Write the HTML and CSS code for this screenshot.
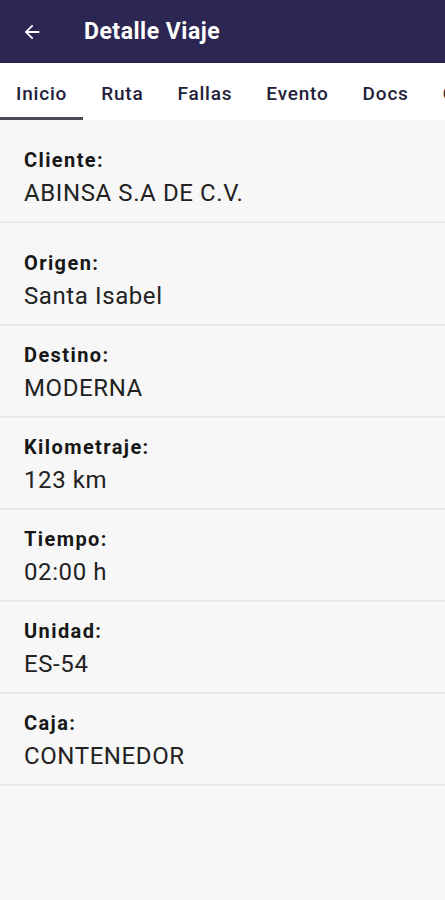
FILE: index.html
```html
<!DOCTYPE html>
<html lang="es">
<head>
  <meta charset="UTF-8" />
  <meta name="viewport" content="width=device-width, initial-scale=1.0" />
  <title>Detalle Viaje</title>
  <link rel="stylesheet" href="styles.css">
</head>
<body>
  <header class="toolbar">
    <svg class="back" width="22" height="22" viewBox="0 0 24 24" aria-hidden="true">
      <path d="M20 11H7.83l5.59-5.59L12 4l-8 8 8 8 1.41-1.41L7.83 13H20v-2z" fill="#fff"/>
    </svg>
    <h1>Detalle Viaje</h1>
  </header>

  <nav class="tabs">
    <span class="tab active">Inicio</span>
    <span class="tab">Ruta</span>
    <span class="tab">Fallas</span>
    <span class="tab">Evento</span>
    <span class="tab">Docs</span>
    <span class="tab">Caja</span>
  </nav>

  <main class="details">
    <div class="row tall">
      <p class="label">Cliente:</p>
      <p class="value">ABINSA S.A DE C.V.</p>
    </div>
    <div class="row tall">
      <p class="label">Origen:</p>
      <p class="value">Santa Isabel</p>
    </div>
    <div class="row">
      <p class="label">Destino:</p>
      <p class="value">MODERNA</p>
    </div>
    <div class="row">
      <p class="label">Kilometraje:</p>
      <p class="value">123 km</p>
    </div>
    <div class="row">
      <p class="label">Tiempo:</p>
      <p class="value">02:00 h</p>
    </div>
    <div class="row">
      <p class="label">Unidad:</p>
      <p class="value">ES-54</p>
    </div>
    <div class="row">
      <p class="label">Caja:</p>
      <p class="value">CONTENEDOR</p>
    </div>
  </main>
</body>
</html>
```

FILE: styles.css
```css
body {
  font-family: Roboto, 'Liberation Sans', sans-serif;
  background-color: #f7f7f7;
  margin: 0;
  padding: 0;
  min-height: 100vh;
  overflow: hidden;
}

.toolbar {
  background-color: #2b2752;
  height: 63px;
  display: flex;
  align-items: center;
  padding: 0 0 0 21px;
}

.back {
  margin-right: 41px;
}

.toolbar h1 {
  color: #fff;
  font-size: 23px;
  font-weight: 700;
  letter-spacing: 0.5px;
  margin: 0;
}

.tabs {
  background-color: #fff;
  height: 57px;
  display: flex;
  white-space: nowrap;
  overflow: hidden;
}

.tab {
  flex: none;
  padding: 3px 16px 0;
  margin-right: 2px;
  font-size: 19px;
  font-weight: 500;
  letter-spacing: 0.8px;
  color: #23213a;
  display: flex;
  align-items: center;
}

.tab.active {
  box-shadow: inset 0 -3px #4a4858;
}

.row {
  padding: 17px 24px 14px;
  border-bottom: 2px solid #e9e9e9;
}

.row.tall {
  padding-top: 28px;
}

.label {
  margin: 0;
  font-size: 20px;
  font-weight: 700;
  letter-spacing: 1.4px;
  color: #171717;
  line-height: 24px;
}

.value {
  margin: 7px 0 0;
  font-size: 24px;
  letter-spacing: 0.6px;
  color: #222;
  line-height: 28px;
}
```
